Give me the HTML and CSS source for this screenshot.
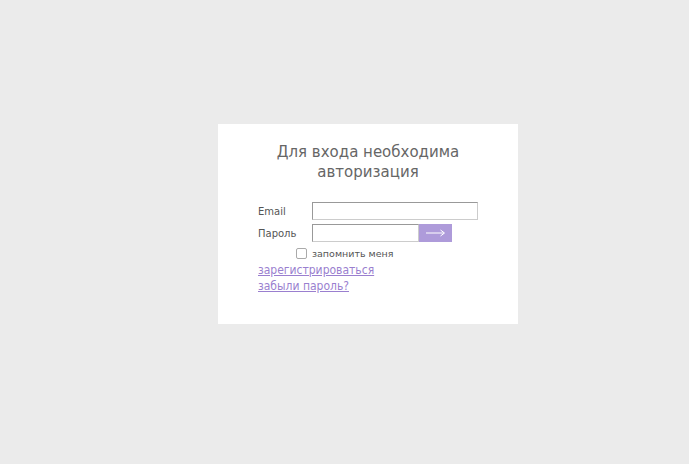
FILE: index.html
```html
<!DOCTYPE html>
<html lang="ru">
<head>
<meta charset="utf-8">
<title>Авторизация</title>
<link rel="stylesheet" href="styles.css">
</head>
<body>
<div class="card">
  <h1 class="title">Для входа необходима<br>авторизация</h1>
  <form class="form">
    <div class="row">
      <label class="label">Email</label>
      <input class="input input-wide" type="text">
    </div>
    <div class="row">
      <label class="label">Пароль</label>
      <input class="input input-short" type="password">
      <button class="go" type="button"><svg width="20" height="8" viewBox="0 0 20 8"><path d="M0 4H18M14.5 1L18.5 4L14.5 7" fill="none" stroke="#fff" stroke-width="1"/></svg></button>
    </div>
    <label class="remember"><span class="box"></span>запомнить меня</label>
    <div class="links">
      <a class="link" href="#">зарегистрироваться</a>
      <a class="link" href="#">забыли пароль?</a>
    </div>
  </form>
</div>
</body>
</html>
```
FILE: styles.css
```css
html, body { margin: 0; padding: 0; }
body {
  background: #ebebeb;
  width: 689px;
  height: 464px;
  overflow: hidden;
  font-family: "DejaVu Sans", Verdana, sans-serif;
}
.card {
  margin: 124px 0 0 218px;
  width: 300px;
  height: 200px;
  background: #fff;
  box-sizing: border-box;
  padding-top: 18px;
}
.title {
  margin: 0;
  text-align: center;
  font-weight: normal;
  font-size: 15px;
  line-height: 20px;
  color: #666;
}
.form {
  margin: 20px 0 0 40px;
  display: flex;
  flex-direction: column;
}
.row {
  display: flex;
  align-items: center;
  height: 18px;
  margin-bottom: 4px;
}
.label {
  width: 54px;
  font-size: 10px;
  color: #555;
}
.input {
  box-sizing: border-box;
  height: 18px;
  margin: 0;
  padding: 0 3px;
  border: 1px solid;
  border-color: #999 #ccc #ccc #999;
  background: #fff;
  outline: none;
}
.input-wide { width: 166px; }
.input-short { width: 107px; }
.go {
  width: 33px;
  height: 18px;
  margin: 0;
  padding: 0;
  border: 0;
  background: #ae9bda;
  display: flex;
  align-items: center;
  justify-content: center;
}
.remember {
  display: flex;
  align-items: center;
  margin-left: 38px;
  height: 15px;
  font-size: 9.5px;
  color: #555;
}
.box {
  width: 9px;
  height: 9px;
  border: 1px solid #aaa;
  border-radius: 2px;
  margin-right: 5px;
}
.links {
  display: flex;
  flex-direction: column;
  margin-top: 1px;
}
.link {
  font-family: "DejaVu Sans Condensed", "DejaVu Sans", sans-serif;
  font-size: 12px;
  line-height: 16px;
  color: #9a7fcf;
  text-decoration: underline;
}
```
